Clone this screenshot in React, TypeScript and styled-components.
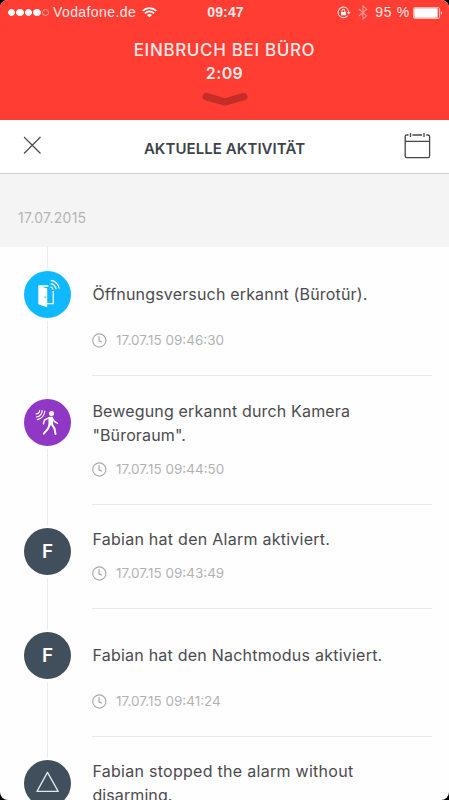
import React from 'react';
import styled, { createGlobalStyle } from 'styled-components';

const GlobalStyle = createGlobalStyle`
  * { box-sizing: border-box; }
  html, body { margin: 0; background: #000; }
  body { font-family: Inter, "Liberation Sans", sans-serif; }
`;

const Screen = styled.main`
  width: 449px;
  height: 800px;
  overflow: hidden;
  border-radius: 8px;
  background: #fefefe;
  display: flex;
  flex-direction: column;
`;

const AlarmHeader = styled.header`
  flex: none;
  height: 120px;
  background: #ff3d33;
  color: #ffe9e7;
`;

const StatusBar = styled.div`
  height: 25px;
  display: grid;
  grid-template-columns: 1fr auto 1fr;
  align-items: center;
  padding: 0 6px 0 8px;
  font-family: "Liberation Sans", sans-serif;
  font-size: 14px;
  line-height: 25px;
`;

const StatusGroup = styled.div<{ $end?: boolean }>`
  display: flex;
  align-items: center;
  justify-content: ${p => (p.$end ? 'flex-end' : 'flex-start')};
  height: 25px;
  white-space: nowrap;
`;

const Signal = styled.div`
  display: flex;
  gap: 1.4px;
  margin-right: 4px;
`;

const Dot = styled.i<{ $empty?: boolean }>`
  width: 7.1px;
  height: 7.1px;
  border-radius: 50%;
  border: 1px solid ${p => (p.$empty ? '#ffaaa4' : '#fff')};
  background: ${p => (p.$empty ? 'transparent' : '#fff')};
`;

const Carrier = styled.span`
  letter-spacing: 0.4px;
  margin-right: 6px;
`;

const Clock = styled.span`
  font-weight: 700;
  letter-spacing: 0.1px;
`;

const Bluetooth = styled.svg`
  margin-left: 7px;
`;

const Percent = styled.span`
  letter-spacing: 0.7px;
  margin: 0 3px 0 7px;
`;

const AlarmTitle = styled.div`
  display: flex;
  flex-direction: column;
  align-items: center;
  padding-top: 13px;
  font-size: 16px;
  font-weight: 500;
  line-height: 24px;
`;

const Fit = styled.span<{ $ls: number }>`
  letter-spacing: ${p => p.$ls}px;
  white-space: nowrap;
`;

const Place = styled(Fit)`
  font-size: 17px;
`;

const Countdown = styled(Fit)`
  font-weight: 600;
  line-height: 22px;
`;

const Chevron = styled.svg`
  margin-top: 8px;
`;

const NavBar = styled.nav`
  flex: none;
  height: 54px;
  display: grid;
  grid-template-columns: 60px 1fr 60px;
  align-items: center;
  border-bottom: 1px solid #cfcfcf;
  background: #fff;
`;

const NavTitle = styled.h1`
  margin: 5px 0 0;
  text-align: center;
  font-size: 15px;
  font-weight: 600;
  line-height: 20px;
  color: #3b4249;
`;

const IconButton = styled.button<{ $end?: boolean }>`
  border: 0;
  padding: ${p => (p.$end ? '0 18.5px 3px 0' : '0 0 3px 23px')};
  background: none;
  display: flex;
  justify-content: ${p => (p.$end ? 'flex-end' : 'flex-start')};
`;

const DateHeading = styled.h2`
  flex: none;
  height: 73px;
  margin: 0;
  padding: 34px 18px 0;
  background: #f4f4f4;
  color: #b4b4b8;
  font-size: 14px;
  font-weight: 400;
  line-height: 20px;
`;

const List = styled.ul`
  list-style: none;
  margin: 0;
  padding: 0;
`;

const Row = styled.li<{ $height: number }>`
  height: ${p => p.$height}px;
  display: grid;
  grid-template-columns: 92px 1fr;
  padding-right: 17px;
`;

const Rail = styled.div`
  display: flex;
  flex-direction: column;
  align-items: center;
  width: 95px;
  height: 100%;
`;

const Segment = styled.div<{ $height?: number }>`
  width: 1.5px;
  background: #ececee;
  ${p => (p.$height ? `flex: none; height: ${p.$height}px;` : 'flex: 1;')}
`;

const Badge = styled.div<{ $color: string }>`
  flex: none;
  width: 47px;
  height: 47px;
  margin: 3px 0;
  border-radius: 50%;
  background: ${p => p.$color};
  color: #fff;
  display: flex;
  align-items: center;
  justify-content: center;
  font-size: 19px;
  font-weight: 600;
`;

const Body = styled.div<{ $top: number }>`
  display: flex;
  flex-direction: column;
  border-bottom: 1px solid #e9e9eb;
  padding-top: ${p => p.$top}px;
`;

const Message = styled.div<{ $height: number }>`
  height: ${p => p.$height}px;
  display: flex;
  flex-direction: column;
  justify-content: center;
  align-items: flex-start;
  padding-left: 0.4px;
  font-size: 16px;
  line-height: 24px;
  color: #4b4b4e;
`;

const Time = styled.div`
  display: flex;
  align-items: center;
  gap: 9px;
  height: 20px;
  margin-top: 12px;
  font-size: 13.5px;
  color: #b2b2b6;
`;

const ClockIcon = () => (
  <svg width="15" height="15" viewBox="0 0 15 15" fill="none" stroke="#aaaaae" strokeWidth="1.2">
    <circle cx="7.3" cy="7.5" r="6.6" />
    <path d="M7 3.3V7.8L10 9.3" />
  </svg>
);

const DoorIcon = () => (
  <svg width="47" height="47" viewBox="0 0 47 47" fill="none" stroke="#fff">
    <path d="M14.3 14.6L23.2 17.4V36.3L14.3 33.2Z" fill="#fff" stroke="none" />
    <path d="M14.5 15H24.5M29.3 20V32.6H23" strokeWidth="1.3" />
    <path d="M21 25.3V27.2" stroke="#10b9ff" strokeWidth="1" />
    <path d="M26.5 16.1A3 3 0 0 1 29 18.6M26.7 12.6A7 7 0 0 1 32 18.2M26.7 9.3A9.5 9.5 0 0 1 35.2 17.5" strokeWidth="1.3" />
  </svg>
);

const WalkIcon = () => (
  <svg width="47" height="47" viewBox="0 0 47 47" fill="none" stroke="#fff" strokeLinecap="round" strokeLinejoin="round">
    <circle cx="27.5" cy="14.6" r="2.5" fill="#fff" stroke="none" />
    <path d="M25.2 18.6L28.2 18.6L28.4 25.5L25.2 25.5Z" fill="#fff" strokeWidth="1.5" />
    <path d="M24.8 18.9L20.6 21L19.4 24.7M28.7 19.5L30.4 22.5L33.5 24.3" strokeWidth="1.5" />
    <path d="M25.7 25.5L24 29.7L19.8 34.7M28 25.5L30.5 29.5L31.5 35" strokeWidth="2" />
    <path d="M12.1 14.9A3.5 3.5 0 0 0 15.7 11.5M12.4 18A7 7 0 0 0 18.2 11.6M13.3 20.7A9.5 9.5 0 0 0 20.8 12" strokeWidth="1.2" />
  </svg>
);

const TriangleIcon = () => (
  <svg width="47" height="47" viewBox="0 0 47 47" fill="none" stroke="#e4e8ec" strokeWidth="1.3" strokeLinejoin="round">
    <path d="M23.5 12.4L34.2 31.4H13Z" />
  </svg>
);

type Line = { text: string; ls: number };
type Activity = {
  icon: React.ReactNode;
  color: string;
  lines: Line[];
  time?: string;
  box: number;
  height: number;
  top: number;
  lead: number;
};

const slate = '#414f5c';
const activities: Activity[] = [
  { icon: <DoorIcon />, color: '#10b9ff', lines: [{ text: 'Öffnungsversuch erkannt (Bürotür).', ls: 0.17 }], time: '17.07.15 09:46:30', box: 48, height: 129, top: 23, lead: 21 },
  { icon: <WalkIcon />, color: '#9137c6', lines: [{ text: 'Bewegung erkannt durch Kamera', ls: 0.17 }, { text: '"Büroraum".', ls: 0.15 }], time: '17.07.15 09:44:50', box: 48, height: 129, top: 23, lead: 20 },
  { icon: 'F', color: slate, lines: [{ text: 'Fabian hat den Alarm aktiviert.', ls: 0.26 }], time: '17.07.15 09:43:49', box: 24, height: 104, top: 22, lead: 20 },
  { icon: 'F', color: slate, lines: [{ text: 'Fabian hat den Nachtmodus aktiviert.', ls: 0.23 }], time: '17.07.15 09:41:24', box: 48, height: 128, top: 22, lead: 20 },
  { icon: <TriangleIcon />, color: slate, lines: [{ text: 'Fabian stopped the alarm without', ls: 0.28 }, { text: 'disarming.', ls: 0.1 }], box: 48, height: 128, top: 22, lead: 20 },
];

export default function App() {
  return (
    <>
      <GlobalStyle />
      <Screen>
        <AlarmHeader>
          <StatusBar>
            <StatusGroup>
              <Signal><Dot /><Dot /><Dot /><Dot /><Dot $empty /></Signal>
              <Carrier>Vodafone.de</Carrier>
              <svg width="15" height="11" viewBox="0 0 15 11" fill="none" stroke="#fff" strokeWidth="1.7">
                <path d="M0.7 3.8A9.8 9.8 0 0 1 14.3 3.8M3 6.3A6.4 6.4 0 0 1 12 6.3" />
                <path d="M7.5 10.6L5 8.1A3.7 3.7 0 0 1 10 8.1Z" fill="#fff" stroke="none" />
              </svg>
            </StatusGroup>
            <Clock>09:47</Clock>
            <StatusGroup $end>
              <svg width="14" height="13" viewBox="0 0 14 13" fill="none" stroke="#ffdad7" strokeWidth="1.1">
                <path d="M10.6 9.6A5.3 5.3 0 1 1 11.7 6" />
                <path d="M9.7 6H13.8L11.7 8.5Z" fill="#ffdad7" stroke="none" />
                <rect x="4" y="6" width="4.8" height="3.3" fill="#fff" stroke="none" />
                <path d="M5 6V4.8A1.4 1.4 0 0 1 7.8 4.8V6" />
              </svg>
              <Bluetooth width="10" height="15" viewBox="0 0 10 15" fill="none" stroke="#ff9790" strokeWidth="1.1">
                <path d="M0.8 4L8.7 10.8L5 14V1L8.7 4.2L0.8 11" />
              </Bluetooth>
              <Percent>95 %</Percent>
              <svg width="30" height="12" viewBox="0 0 30 12">
                <rect x="0.5" y="0.5" width="26" height="11" rx="1.5" fill="none" stroke="#ffb6b1" />
                <rect x="1.3" y="1.3" width="23.4" height="9.4" rx="0.5" fill="#fff" />
                <path d="M27.8 4Q30 6 27.8 8Z" fill="#fff" />
              </svg>
            </StatusGroup>
          </StatusBar>
          <AlarmTitle>
            <Place $ls={0.65}>EINBRUCH BEI BÜRO</Place>
            <Countdown $ls={0.4}>2:09</Countdown>
            <Chevron width="46" height="15" viewBox="0 0 46 15" fill="none" stroke="#c52e28" strokeWidth="7.5" strokeLinecap="round" strokeLinejoin="round">
              <path d="M4.3 4.6L23 10L41.7 4.6" />
            </Chevron>
          </AlarmTitle>
        </AlarmHeader>
        <NavBar>
          <IconButton aria-label="Schließen">
            <svg width="18" height="18" viewBox="0 0 18 18" fill="none" stroke="#4a4a4e" strokeWidth="1.2">
              <path d="M1 1L17.5 17.5M17.5 1L1 17.5" />
            </svg>
          </IconButton>
          <NavTitle><Fit $ls={0.07}>AKTUELLE AKTIVITÄT</Fit></NavTitle>
          <IconButton $end aria-label="Kalender">
            <svg width="27" height="27" viewBox="0 0 27 27" fill="none" stroke="#45454a" strokeWidth="1.3">
              <path d="M4.5 3H2.8Q1.2 3 1.2 4.6V24Q1.2 25.6 2.8 25.6H24Q25.6 25.6 25.6 24V4.6Q25.6 3 24 3H22.3M8.4 3H18M1.2 9.3H25.6M6.5 1V5M20 1V5" />
            </svg>
          </IconButton>
        </NavBar>
        <DateHeading><Fit $ls={0.25}>17.07.2015</Fit></DateHeading>
        <List>
          {activities.map((a, i) => (
            <Row key={i} $height={a.height}>
              <Rail>
                <Segment $height={a.lead} />
                <Badge $color={a.color}>{a.icon}</Badge>
                <Segment />
              </Rail>
              <Body $top={a.top}>
                <Message $height={a.box}>
                  {a.lines.map(l => <Fit key={l.text} $ls={l.ls}>{l.text}</Fit>)}
                </Message>
                {a.time && <Time><ClockIcon /><Fit $ls={0}>{a.time}</Fit></Time>}
              </Body>
            </Row>
          ))}
        </List>
      </Screen>
    </>
  );
}
